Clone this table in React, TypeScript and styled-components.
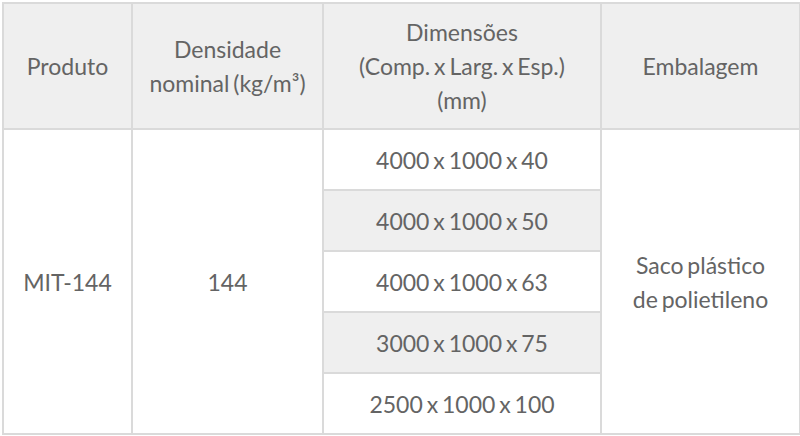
import React from 'react'
import styled, { createGlobalStyle } from 'styled-components'

const GlobalStyle = createGlobalStyle`
    html, body {
        margin: 0;
        padding: 0;
        background: #fff;
    }
`

const Wrapper = styled.div`
    padding: 2px 1px 0 2px;
    font-family: Lato, "Open Sans", sans-serif;
`

const Table = styled.table`
    width: 797px;
    border-collapse: collapse;
    table-layout: fixed;
    color: #646464;
    font-size: 23px;
    word-spacing: -2px;
`

const HeadCell = styled.th`
    height: 124px;
    background: #efefef;
    border: 2px solid #dadada;
    font-weight: normal;
    line-height: 34px;
    text-align: center;
    vertical-align: middle;
    padding: 0 2px;
`

const Row = styled.tr`
    height: 61px;
`

const Cell = styled.td<{ $shade?: boolean }>`
    border: 2px solid #dadada;
    text-align: center;
    vertical-align: middle;
    line-height: 34px;
    padding: 0 2px;
    background: ${(p) => (p.$shade ? '#efefef' : '#fff')};
`

const sizes = [
    '4000 x 1000 x 40',
    '4000 x 1000 x 50',
    '4000 x 1000 x 63',
    '3000 x 1000 x 75',
    '2500 x 1000 x 100',
]

export default function App() {
    return (
        <Wrapper>
            <GlobalStyle />
            <Table>
                <colgroup>
                    <col style={{ width: 129 }} />
                    <col style={{ width: 191 }} />
                    <col style={{ width: 278 }} />
                    <col style={{ width: 199 }} />
                </colgroup>
                <thead>
                    <tr>
                        <HeadCell>Produto</HeadCell>
                        <HeadCell>Densidade<br />nominal (kg/m³)</HeadCell>
                        <HeadCell>Dimensões<br />(Comp. x Larg. x Esp.)<br />(mm)</HeadCell>
                        <HeadCell>Embalagem</HeadCell>
                    </tr>
                </thead>
                <tbody>
                    {sizes.map((s, i) => (
                        <Row key={s}>
                            {i === 0 && (
                                <>
                                    <Cell rowSpan={5}>MIT-144</Cell>
                                    <Cell rowSpan={5}>144</Cell>
                                </>
                            )}
                            <Cell $shade={i % 2 === 1}>{s}</Cell>
                            {i === 0 && <Cell rowSpan={5}>Saco plástico<br />de polietileno</Cell>}
                        </Row>
                    ))}
                </tbody>
            </Table>
        </Wrapper>
    )
}
